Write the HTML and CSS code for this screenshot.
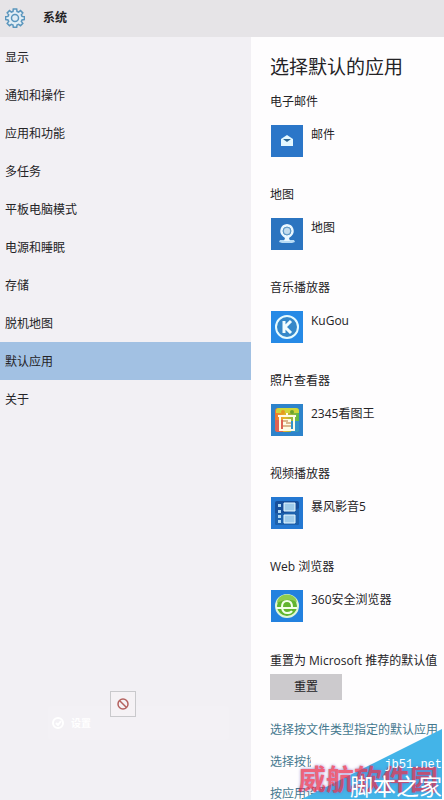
FILE: index.html
```html
<!DOCTYPE html>
<html lang="zh-CN">
<head>
    <meta charset="UTF-8">
    <meta name="viewport" content="width=device-width, initial-scale=1.0">
    <title>系统</title>
    <link rel="stylesheet" href="styles.css">
</head>
<body>
    <header class="header">
        <svg class="gear" viewBox="0 0 20 20">
            <path d="M8.3 1h3.4l.3 2.4 1.6.7 1.9-1.5 2.3 2.3-1.5 1.9.7 1.6 2.4.3v2.8l-2.4.4-.7 1.6 1.5 1.9-2.3 2.3-1.9-1.4-1.6.7-.3 2.3H8.3L8 17l-1.6-.7-1.9 1.4-2.3-2.3 1.5-1.9-.7-1.6-2.4-.4V8.700l2.4-.3.7-1.6-1.5-1.9 2.3-2.3 1.9 1.5L8 3.400z"/>
            <circle cx="10" cy="10" r="3.5"/>
        </svg>
        <h1>系统</h1>
    </header>
    <div class="page">
        <aside class="sidebar">
            <nav>
                <a href="#">显示</a>
                <a href="#">通知和操作</a>
                <a href="#">应用和功能</a>
                <a href="#">多任务</a>
                <a href="#">平板电脑模式</a>
                <a href="#">电源和睡眠</a>
                <a href="#">存储</a>
                <a href="#">脱机地图</a>
                <a href="#" class="active">默认应用</a>
                <a href="#">关于</a>
            </nav>
            <div class="ghost">
                <svg class="ghost-icon" viewBox="0 0 14 14">
                    <circle cx="7" cy="7" r="5"/>
                    <path d="M5 7l2 2 3-4"/>
                </svg>
                <span>设置</span>
                <div class="blocked">
                    <svg viewBox="0 0 12 12">
                        <circle cx="6" cy="6" r="5"/>
                        <path d="M2.5 2.5l7 7"/>
                    </svg>
                </div>
            </div>
        </aside>
        <main>
            <h2>选择默认的应用</h2>
            <section>
                <h3>电子邮件</h3>
                <button class="app">
                    <svg viewBox="0 0 32 32">
                        <rect width="32" height="32" fill="#2b76c8"/>
                        <path d="M10 14l6-4 6 4v7H10z" fill="#e4f8ff"/>
                        <path d="M12 14h8l-4 3z" fill="#2c6590"/>
                    </svg>
                    <span>邮件</span>
                </button>
            </section>
            <section>
                <h3>地图</h3>
                <button class="app">
                    <svg viewBox="0 0 32 32">
                        <rect width="32" height="32" fill="#2b74c0"/>
                        <path d="M9 22h14l1 2-3 1H11l-3-1z" fill="#b9dcf5"/>
                        <path d="M16 6a7 7 0 0 0-4 12.500l2 1.500-1 3h6l-1-3 2-1.500A7 7 0 0 0 16 6z" fill="#eaf7ff"/>
                        <circle cx="16" cy="13" r="4" fill="#7eaed5" stroke="#5d97c6"/>
                        <circle cx="16" cy="13" r="3" fill="#c3dcee"/>
                    </svg>
                    <span>地图</span>
                </button>
            </section>
            <section>
                <h3>音乐播放器</h3>
                <button class="app">
                    <svg viewBox="0 0 32 32">
                        <rect width="32" height="32" fill="#268ae6"/>
                        <circle cx="16" cy="16" r="11" fill="#3588c9" stroke="#e6fbff" stroke-width="2"/>
                        <path d="M13 10v12M20 10l-6 6 6 6" fill="none" stroke="#f2fdff" stroke-width="3"/>
                    </svg>
                    <span>KuGou</span>
                </button>
            </section>
            <section>
                <h3>照片查看器</h3>
                <button class="app">
                    <svg viewBox="0 0 32 32">
                        <defs>
                            <linearGradient id="photo" x1="0" y1="0" x2="1" y2="0">
                                <stop offset="0" stop-color="#f0702f"/>
                                <stop offset=".4" stop-color="#e7b52b"/>
                                <stop offset="1" stop-color="#55b94b"/>
                            </linearGradient>
                        </defs>
                        <rect width="32" height="32" fill="#2d83cb"/>
                        <rect x="4" y="4" width="24" height="24" rx="3" fill="url(#photo)"/>
                        <path d="M4 16h8v12H7q-3 0-3-3z" fill="#df6254"/>
                        <path d="M20 17h8v8q0 3-3 3h-5z" fill="#3293c9"/>
                        <path d="M5 7q0-3 3-3h17q3 0 3 3v2H5z" fill="#cfd63a"/>
                        <circle cx="12" cy="8" r="2" fill="#e59a20"/>
                        <circle cx="21" cy="8" r="2" fill="#6da32c"/>
                        <path d="M7 12h18M16 9v3M9 13v13h14V13" fill="none" stroke="#fffce6" stroke-width="2"/>
                        <path d="M12 15h8v10h-8z" fill="#fffce6"/>
                        <path d="M12 17h5M15 19h5M12 22h8" stroke="#b77738"/>
                    </svg>
                    <span>2345看图王</span>
                </button>
            </section>
            <section>
                <h3>视频播放器</h3>
                <button class="app">
                    <svg viewBox="0 0 32 32">
                        <rect width="32" height="32" fill="#2478d2"/>
                        <rect x="4" y="4" width="24" height="24" rx="2" fill="#174f9b"/>
                        <path d="M4 16q12 2 24-5v15q0 2-2 2H6q-2 0-2-2z" fill="#1d62ae"/>
                        <path d="M13 6h11v8H13zM13 18h11v8H13z" fill="#9fcbea" stroke="#e7f8ff"/>
                        <path d="M7 7h3v3H7zM7 13h3v3H7zM7 18h3v3H7zM7 23h3v3H7z" fill="#aed9f5"/>
                    </svg>
                    <span>暴风影音5</span>
                </button>
            </section>
            <section>
                <h3>Web 浏览器</h3>
                <button class="app">
                    <svg viewBox="0 0 32 32">
                        <rect width="32" height="32" fill="#2381df"/>
                        <circle cx="16" cy="16" r="11" fill="#61b52f" stroke="#dff5d8" stroke-width="2"/>
                        <path d="M6 13a10 8 0 0 1 20-1q-10-5-20 1z" fill="#8dcc4e"/>
                        <path d="M5 18h21M11 17q0-6 5-6t5 6M11 18q1 5 5 5t5-2" fill="none" stroke="#f3ffe9" stroke-width="2"/>
                    </svg>
                    <span>360安全浏览器</span>
                </button>
            </section>
            <div class="reset">
                <h3>重置为 Microsoft 推荐的默认值</h3>
                <button class="btn">重置</button>
            </div>
            <div class="links">
                <a href="#">选择按文件类型指定的默认应用</a>
                <a href="#" class="short">选择按协议指定的默认应用</a>
                <a href="#">按应用设置默认值</a>
            </div>
        </main>
    </div>
    <div class="watermark">
        <svg viewBox="0 0 140 70"><path d="M0 70L140 0v70z"/></svg>
        <span class="site-stamp">威航软件园</span>
        <span class="site-url">jb51.net</span>
        <span class="site-name">脚本之家</span>
    </div>
</body>
</html>
```

FILE: styles.css
```css
* {
    box-sizing: border-box;
}
body {
    font-family: "Open Sans", "Noto Sans CJK SC", sans-serif;
    font-size: 12px;
    line-height: 20px;
    color: #242326;
    background-color: #fefdfe;
    margin: 0;
    height: 100vh;
    display: flex;
    flex-direction: column;
    position: relative;
    overflow: hidden;
}
h1, h2, h3 {
    margin: 0;
    font-size: 12px;
    font-weight: normal;
}
a {
    text-decoration: none;
}
button {
    font: inherit;
    color: inherit;
    border: none;
    padding: 0;
    cursor: pointer;
}
.header {
    height: 37px;
    flex-shrink: 0;
    display: flex;
    align-items: center;
    gap: 18px;
    padding: 0 5px 2px;
    background-color: #e6e4e7;
}
.header h1 {
    font-weight: bold;
}
.gear {
    width: 20px;
    height: 20px;
    fill: #e1edf5;
    stroke: #5b96bd;
    stroke-width: 1.5;
}
.page {
    flex: 1;
    min-height: 0;
    display: grid;
    grid-template-columns: 13fr 10fr;
}
.sidebar {
    background-color: #f2f0f4;
    position: relative;
}
.sidebar nav {
    display: flex;
    flex-direction: column;
    padding-top: 1px;
}
.sidebar nav a {
    padding: 10px 5px 8px;
    color: #242326;
}
.sidebar nav .active {
    background-color: #a2c1e3;
}
.ghost {
    position: absolute;
    left: 48px;
    right: 22px;
    bottom: 60px;
    height: 34px;
    display: flex;
    align-items: center;
    gap: 6px;
    padding: 0 3px;
    border-radius: 4px;
    background-color: #f3f1f5;
    color: #fff;
    font-weight: bold;
    font-size: 10px;
}
.ghost-icon {
    width: 14px;
    height: 14px;
    fill: none;
    stroke: #fff;
    stroke-width: 2;
}
.blocked {
    position: absolute;
    left: 62px;
    bottom: 23px;
    width: 26px;
    height: 26px;
    display: flex;
    align-items: center;
    justify-content: center;
    border: 1px solid #c9c9cc;
    background-color: #f5f2f5;
}
.blocked svg {
    width: 12px;
    height: 12px;
    fill: none;
    stroke: #b4625f;
    stroke-width: 1.5;
}
main {
    padding: 15px 0 0 19px;
    white-space: nowrap;
    overflow: hidden;
}
h2 {
    font-size: 19px;
    line-height: 30px;
    margin-bottom: 10px;
}
section {
    height: 93px;
}
.app {
    display: flex;
    align-items: flex-start;
    gap: 8px;
    margin: 13px 0 0 1px;
    background: none;
}
.app svg {
    width: 32px;
    height: 32px;
}
.reset {
    margin-top: 1px;
}
.btn {
    width: 72px;
    height: 26px;
    margin-top: 3px;
    background-color: #cccacd;
}
.links {
    display: flex;
    flex-direction: column;
    align-items: flex-start;
    gap: 12px;
    margin-top: 20px;
}
.links a {
    color: #44788e;
}
.links .short {
    width: 41px;
    overflow: hidden;
}
.watermark {
    position: absolute;
    right: 2px;
    bottom: 1px;
    width: 140px;
    height: 70px;
    color: #fff;
    white-space: nowrap;
    pointer-events: none;
}
.watermark svg {
    display: block;
    width: 100%;
    height: 100%;
    fill: #43b4e8;
}
.watermark span {
    position: absolute;
    right: 0;
}
.site-url {
    bottom: 24px;
    font-family: "Liberation Mono", monospace;
    font-size: 12px;
}
.site-name {
    bottom: 0;
    font-size: 23px;
    line-height: 26px;
}
.watermark .site-stamp {
    right: 4px;
    bottom: 4px;
    font-size: 28px;
    line-height: 32px;
    font-weight: bold;
    color: #e8304f;
    opacity: 0.75;
    text-shadow: 0 0 3px #7a58b8;
}
```
